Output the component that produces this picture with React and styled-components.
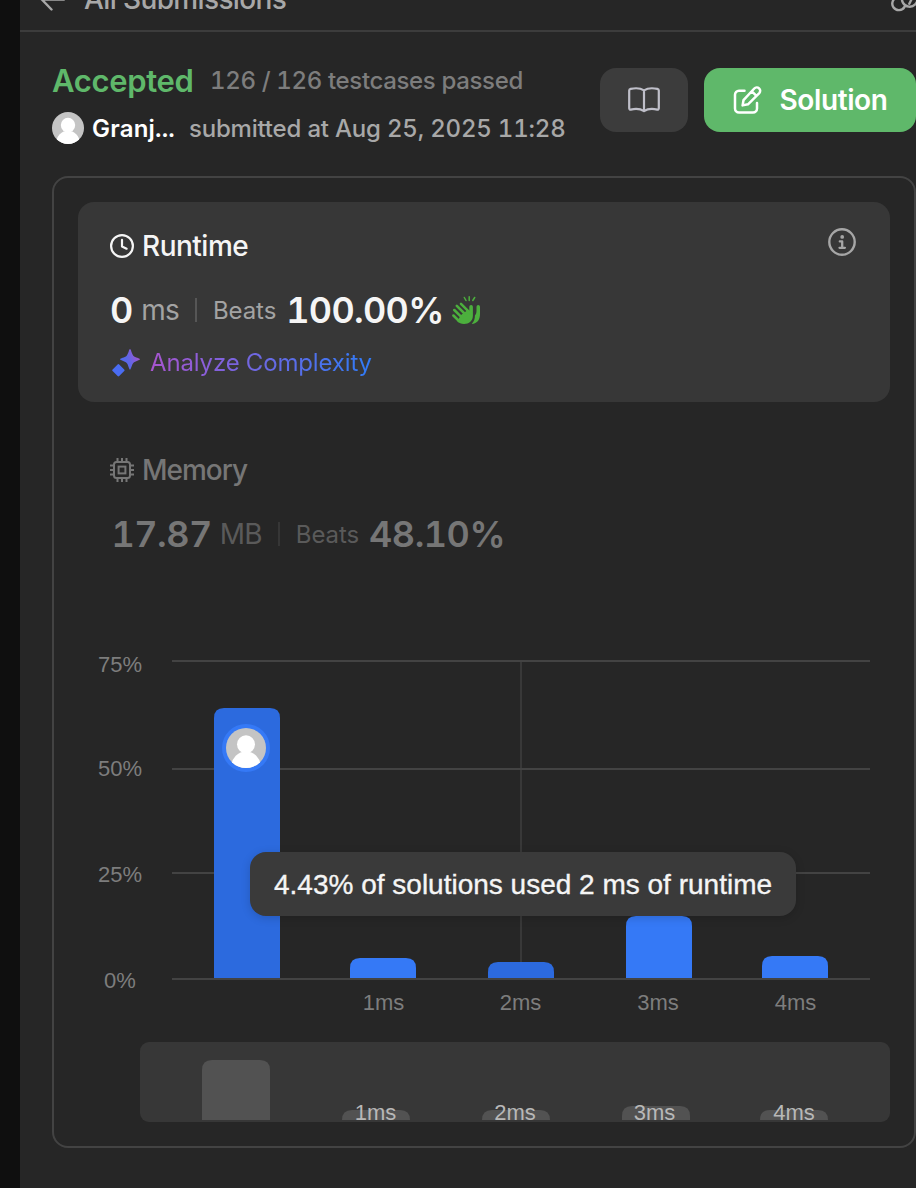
import React from 'react';
import styled, { createGlobalStyle, css } from 'styled-components';

const GlobalStyle = createGlobalStyle`
  * { box-sizing: border-box; }
  html, body { margin: 0; background: #0f0f0f; }
  body {
    width: 916px; height: 1188px; overflow: hidden;
    font-family: Inter, "Liberation Sans", sans-serif;
    font-variant-numeric: tabular-nums;
  }
  svg { display: block; flex: none; }
`;

const Page = styled.main`
  height: 1188px;
  padding-left: 20px;
  overflow: hidden;
  background: #0f0f0f;
`;
const Panel = styled.section`
  height: 1188px;
  background: #262626;
  overflow: hidden;
`;
const TopBar = styled.header`
  display: flex;
  align-items: center;
  height: 66px;
  margin-top: -34px;
  padding-left: 20px;
  border-bottom: 2px solid #3c3c3c;
  color: #a8a8a8;
`;
const TopTitle = styled.span`
  flex: 1;
  margin-left: 18px;
  padding-top: 1px;
  font-size: 28px;
  font-weight: 500;
  line-height: 40px;
  letter-spacing: -0.63px;
`;
const Body = styled.div`padding: 36px 0 0 32px;`;
const Summary = styled.div`
  display: flex;
  align-items: flex-start;
  justify-content: space-between;
  height: 108px;
`;
const StatusRow = styled.div`
  display: flex;
  align-items: center;
  height: 26px;
  line-height: 26px;
  white-space: nowrap;
`;
const Verdict = styled.span`
  width: 158px;
  color: #5fb86a;
  font-size: 31px;
  font-weight: 600;
  letter-spacing: -0.33px;
`;
const Testcases = styled.span`
  color: #7d7d7d;
  font-size: 24px;
  font-weight: 500;
  letter-spacing: -0.35px;
`;
const AuthorRow = styled.div`
  display: flex;
  align-items: center;
  height: 32px;
  margin-top: 18px;
  line-height: 32px;
  white-space: nowrap;
`;
const Author = styled.span`
  width: 97px;
  margin-left: 8px;
  padding-top: 2px;
  color: #fff;
  font-size: 24px;
  font-weight: 600;
  letter-spacing: 0.2px;
`;
const Submitted = styled.span`
  padding-top: 2px;
  color: #a8a8a8;
  font-size: 24px;
  font-weight: 500;
  letter-spacing: -0.2px;
`;
const Actions = styled.div`display: flex; gap: 16px;`;
const Button = styled.button`
  display: flex;
  align-items: center;
  justify-content: center;
  height: 64px;
  width: ${p => (p.$primary ? 212 : 88)}px;
  gap: 18px;
  padding: 0;
  border: 0;
  border-radius: 16px;
  background: ${p => (p.$primary ? '#5fb86a' : '#3c3c3c')};
  color: ${p => (p.$primary ? '#fff' : '#bfbfc9')};
  font: 600 28px/40px Inter, sans-serif;
  letter-spacing: -0.4px;
`;
const Card = styled.div`
  position: relative;
  height: 972px;
  border: 2px solid #434343;
  border-radius: 16px;
  padding: 24px;
`;
const Metric = styled.article`
  height: 200px;
  padding: 24px 32px;
  border-radius: 16px;
  ${p => p.$active ? css`background: #373737; color: #f5f5f5;` : css`margin-top: 24px; color: #767676;`}
`;
const MetricHead = styled.div`
  display: flex;
  align-items: center;
  justify-content: space-between;
  height: 40px;
`;
const MetricName = styled.div`
  display: flex;
  align-items: center;
  gap: 8px;
  font-size: 28px;
  font-weight: 500;
  line-height: 40px;
  letter-spacing: ${p => p.$track}px;
`;
const InfoSlot = styled.span`padding: 0 2px 8px 0; color: #a6a6a6;`;
const Figures = styled.div`
  display: flex;
  align-items: center;
  height: 48px;
  margin-top: 20px;
  white-space: nowrap;
`;
const Amount = styled.span`
  padding-left: ${p => p.$inset || 0}px;
  font-size: 36px;
  font-weight: 600;
  line-height: 48px;
  letter-spacing: ${p => p.$track || 0}px;
`;
const Unit = styled.span`
  margin-left: 8px;
  font-size: 28px;
  line-height: 48px;
  letter-spacing: -0.8px;
  color: ${p => (p.$active ? '#a3a3a3' : '#5a5a5a')};
`;
const Divider = styled.i`
  width: 2px;
  height: 24px;
  margin: 0 16px;
  background: ${p => (p.$active ? '#565656' : '#363636')};
`;
const Beats = styled.span`
  margin-right: 10px;
  padding-top: 2px;
  font-size: 24px;
  line-height: 48px;
  letter-spacing: -0.1px;
  color: ${p => (p.$active ? '#a3a3a3' : '#5a5a5a')};
`;
const Applause = styled.span`margin-left: 8px;`;
const Analyze = styled.div`
  display: flex;
  align-items: center;
  gap: 10px;
  height: 32px;
  margin-top: 13px;
  padding-left: 2px;
`;
const AnalyzeText = styled.span`
  font-size: 24px;
  line-height: 32px;
  background: linear-gradient(90deg, #a855cf, #2f7bf6);
  background-clip: text;
  -webkit-background-clip: text;
  color: transparent;
  letter-spacing: -0.15px;
`;
const Tooltip = styled.div`
  position: absolute;
  left: 196px;
  top: 674px;
  width: 546px;
  height: 64px;
  padding: 1px 24px 0;
  border-radius: 16px;
  background: #3a3a3a;
  box-shadow: 0 2px 10px rgba(0, 0, 0, 0.16);
  color: #f5f5f5;
  font: 28px/64px "Liberation Sans", sans-serif;
  -webkit-text-stroke: 0.35px currentColor;
  white-space: nowrap;
`;
const ChartSvg = styled.svg`
  text {
    font-family: "Liberation Sans", sans-serif;
    font-size: 22px;
    text-anchor: middle;
    -webkit-text-stroke: 0.25px currentColor;
  }
`;
const AxisText = styled.text`
  fill: ${p => (p.$mini ? '#b8b8b8' : '#7d7d7d')};
  color: ${p => (p.$mini ? '#b8b8b8' : '#7d7d7d')};
`;

const BackIcon = () => (
  <svg width="26" height="26" viewBox="0 0 26 26" fill="none" stroke="currentColor" strokeWidth="2.4" strokeLinecap="round" strokeLinejoin="round">
    <path d="M24 14.5H2M11.5 24.5L1.800 14.500l9.700-10" />
  </svg>
);
const LinkIcon = () => (
  <svg width="26" height="28" viewBox="1 -1 26 28" fill="none" stroke="currentColor" strokeWidth="2.400" strokeLinecap="round">
    <path d="M8.500 12.300a6.500 6.500 0 1 0 7 9.500M13.500 11a7.800 7.800 0 1 0 15 2M20.300 18.800l2-4" />
  </svg>
);
const BookIcon = () => (
  <svg width="32" height="28" viewBox="0 0 32 28" fill="none" stroke="currentColor" strokeWidth="2.2" strokeLinejoin="round" strokeLinecap="round">
    <path d="M16 4.400C12.400 2 6.600 2 2.600 2.900a1.800 1.800 0 0 0-1.400 1.800V22.300a1.300 1.300 0 0 0 1.600 1.300C7 22.600 12.200 22.600 16 25.200C19.800 22.600 25 22.600 29.200 23.600a1.300 1.300 0 0 0 1.600-1.300V4.700a1.800 1.800 0 0 0-1.400-1.800C25.400 2 19.600 2 16 4.400V24" />
  </svg>
);
const EditIcon = () => (
  <svg width="29" height="28" viewBox="0 0 29 28" fill="none" stroke="currentColor" strokeWidth="2.500" strokeLinecap="round" strokeLinejoin="round">
    <path d="M11.500 4.800H6a4 4 0 0 0-4 4V22.600a4 4 0 0 0 4 4H20a4 4 0 0 0 4-4V17" />
    <path d="M9.600 19.400l.9-5.200L21.300 2.500a3.200 3.200 0 0 1 5 4.600L15 18.300ZM18.900 5.300l4.500 4.500" />
  </svg>
);
const ClockIcon = () => (
  <svg width="24" height="24" viewBox="0 0 24 24" fill="none" stroke="currentColor" strokeWidth="2.200" strokeLinecap="round" strokeLinejoin="round">
    <circle cx="12" cy="12" r="10.900" /><path d="M12 5.900v6.500l4.600 2.300" />
  </svg>
);
const ChipIcon = () => (
  <svg width="24" height="24" viewBox="0 0 24 24" fill="none" stroke="currentColor" strokeWidth="2">
    <rect x="4" y="4" width="16" height="16" rx="2.500" /><rect x="8.600" y="8.600" width="6.800" height="6.800" />
    <path d="M7.500 0v4M12 0v4M16.500 0v4M7.500 20v4M12 20v4M16.500 20v4M0 7.500h4M0 12h4M0 16.500h4M20 7.500h4M20 12h4M20 16.500h4" />
  </svg>
);
const InfoIcon = () => (
  <svg width="28" height="28" viewBox="0 0 28 28" fill="none" stroke="currentColor" strokeWidth="2.400">
    <circle cx="14" cy="14" r="12.700" /><circle cx="14.200" cy="8.900" r="1.900" fill="currentColor" stroke="none" />
    <path d="M11.800 13.400H14.200V19.800M11.500 19.800h5.400" strokeLinecap="round" strokeLinejoin="round" strokeWidth="2.300" />
  </svg>
);
const ClapIcon = () => (
  <svg width="28" height="28" viewBox="0 0 28 28" fill="#4caf3d" stroke="#4caf3d" strokeLinecap="round">
    <path stroke="none" d="M17.300 10.700a1.800 1.800 0 0 1 3.600 0V19.500C20.900 25 17 28 12 28C9 28 7.200 27.200 5.300 25.300L9 19L15 14.500L17.300 14.800Z" />
    <path fill="none" strokeWidth="2.500" d="M1.400 19.500L7 25M2.300 14L10 21.700M4.800 9.800L14 19M9 7.800L18 16.800" />
    <path stroke="none" d="M24.500 10.700a1.750 1.750 0 0 1 3.500 0V18C28 23.500 25.500 27.500 19.700 28C22.500 25 22.800 22.500 22.900 19.500C24 18 24.500 17 24.500 15Z" />
    <path fill="none" strokeWidth="1.500" d="M12.300 1.500L14 4.500M17.200 .8V4.600M22.700 1.500L20.800 4.500" />
  </svg>
);
const SparkleIcon = () => (
  <svg width="28" height="28" viewBox="0 0 28 28">
    <defs><linearGradient id="spark" gradientUnits="userSpaceOnUse" x1="9" y1="18" x2="27" y2="11">
      <stop offset="0" stopColor="#4a6cf2" /><stop offset="0.500" stopColor="#5f66e6" /><stop offset="1" stopColor="#9a58d2" />
    </linearGradient></defs>
    <path fill="url(#spark)" d="M18 0C19 0 19.700 4.800 21.300 6.700C23.200 8.500 28 9.300 28 10.300S23.200 12 21.300 13.900C19.700 15.700 19 20.500 18 20.500S16.400 15.700 14.700 13.900C12.800 12 8 11.300 8 10.300S12.800 8.500 14.700 6.700C16.400 4.800 17 0 18 0Z" />
    <path fill="#4a6cf2" d="M5.600 15.500Q6.400 14.700 7.200 15.500L12.200 20.500Q13 21.300 12.200 22.100L7.200 27.100Q6.400 27.900 5.600 27.100L.6 22.100Q-.2 21.300 .6 20.500Z" />
  </svg>
);
const Avatar = ({ size, x, y }) => (
  <svg width={size} height={size} x={x} y={y} viewBox="0 0 40 40">
    <defs><clipPath id={`face${size}`}><circle cx="20" cy="20" r="20" /></clipPath></defs>
    <g clipPath={`url(#face${size})`}>
      <rect width="40" height="40" fill="#c4c4c4" />
      <circle cx="20" cy="16.300" r="9" fill="#fff" /><circle cx="20" cy="38" r="14.500" fill="#fff" />
    </g>
  </svg>
);

const BASE = 352;
const bars = [
  { x: 136, top: 82, dim: true, mini: 124, miniTop: 434 },
  { x: 272, top: 332, label: '1ms', at: 305.5, mini: 264, miniTop: 484, miniAt: 297.5 },
  { x: 410, top: 336, dim: true, label: '2ms', at: 442.5, mini: 404, miniTop: 484, miniAt: 437 },
  { x: 548, top: 290, label: '3ms', at: 580, mini: 544, miniTop: 480, miniAt: 576.5 },
  { x: 684, top: 330, label: '4ms', at: 717.5, mini: 682, miniTop: 484, miniAt: 716 },
];
const ticks = [['75%', 35, 46], ['50%', 143, 150], ['25%', 247, 256], ['0%', 353, 362]];
const topRound = (x, y, w, base, r) =>
  `M${x} ${base}V${y + r}q0-${r} ${r}-${r}H${x + w - r}q${r} 0 ${r} ${r}V${base}Z`;

const Chart = () => (
  <ChartSvg width="812" height="496" viewBox="0 0 812 496">
    <path d={`M443 35V${BASE}`} stroke="#383838" strokeWidth="2" />
    {ticks.map(([label, y, baseline]) => (
      <g key={label}>
        <AxisText x="42" y={baseline}>{label}</AxisText>
        <path d={`M94 ${y}H792`} stroke="#434343" strokeWidth="2" />
      </g>
    ))}
    {bars.map(b => (
      <g key={b.x}>
        <path d={topRound(b.x, b.top, 66, BASE, 10)} fill={b.dim ? '#2c6ade' : '#3579f6'} />
        {b.label && <AxisText x={b.at} y="384">{b.label}</AxisText>}
      </g>
    ))}
    <circle cx="168" cy="122" r="24" fill="#3579f6" />
    <Avatar size={40} x={148} y={102} />
    <rect x="62" y="416" width="750" height="80" rx="9" fill="#373737" />
    {bars.map(b => (
      <g key={b.mini}>
        <path d={topRound(b.mini, b.miniTop, 68, 494, 10)} fill="#525252" />
        {b.label && <AxisText $mini x={b.miniAt} y="494">{b.label}</AxisText>}
      </g>
    ))}
  </ChartSvg>
);

export default function App() {
  return (
    <Page>
      <GlobalStyle />
      <Panel>
        <TopBar><BackIcon /><TopTitle>All Submissions</TopTitle><LinkIcon /></TopBar>
        <Body>
          <Summary>
            <div>
              <StatusRow><Verdict>Accepted</Verdict><Testcases>126 / 126 testcases passed</Testcases></StatusRow>
              <AuthorRow><Avatar size={32} /><Author>Granj...</Author><Submitted>submitted at Aug 25, 2025 11:28</Submitted></AuthorRow>
            </div>
            <Actions>
              <Button aria-label="Editorial"><BookIcon /></Button>
              <Button $primary><EditIcon />Solution</Button>
            </Actions>
          </Summary>
          <Card>
            <Metric $active>
              <MetricHead><MetricName $track={-0.5}><ClockIcon />Runtime</MetricName><InfoSlot><InfoIcon /></InfoSlot></MetricHead>
              <Figures>
                <Amount>0</Amount><Unit $active>ms</Unit><Divider $active />
                <Beats $active>Beats</Beats><Amount $track={-0.7}>100.00%</Amount><Applause><ClapIcon /></Applause>
              </Figures>
              <Analyze><SparkleIcon /><AnalyzeText>Analyze Complexity</AnalyzeText></Analyze>
            </Metric>
            <Metric>
              <MetricHead><MetricName $track={-1}><ChipIcon />Memory</MetricName></MetricHead>
              <Figures>
                <Amount $track={-0.5} $inset={1.5}>17.87</Amount><Unit>MB</Unit><Divider />
                <Beats>Beats</Beats><Amount $track={-0.5}>48.10%</Amount>
              </Figures>
            </Metric>
            <Chart />
            <Tooltip>4.43% of solutions used 2 ms of runtime</Tooltip>
          </Card>
        </Body>
      </Panel>
    </Page>
  );
}
